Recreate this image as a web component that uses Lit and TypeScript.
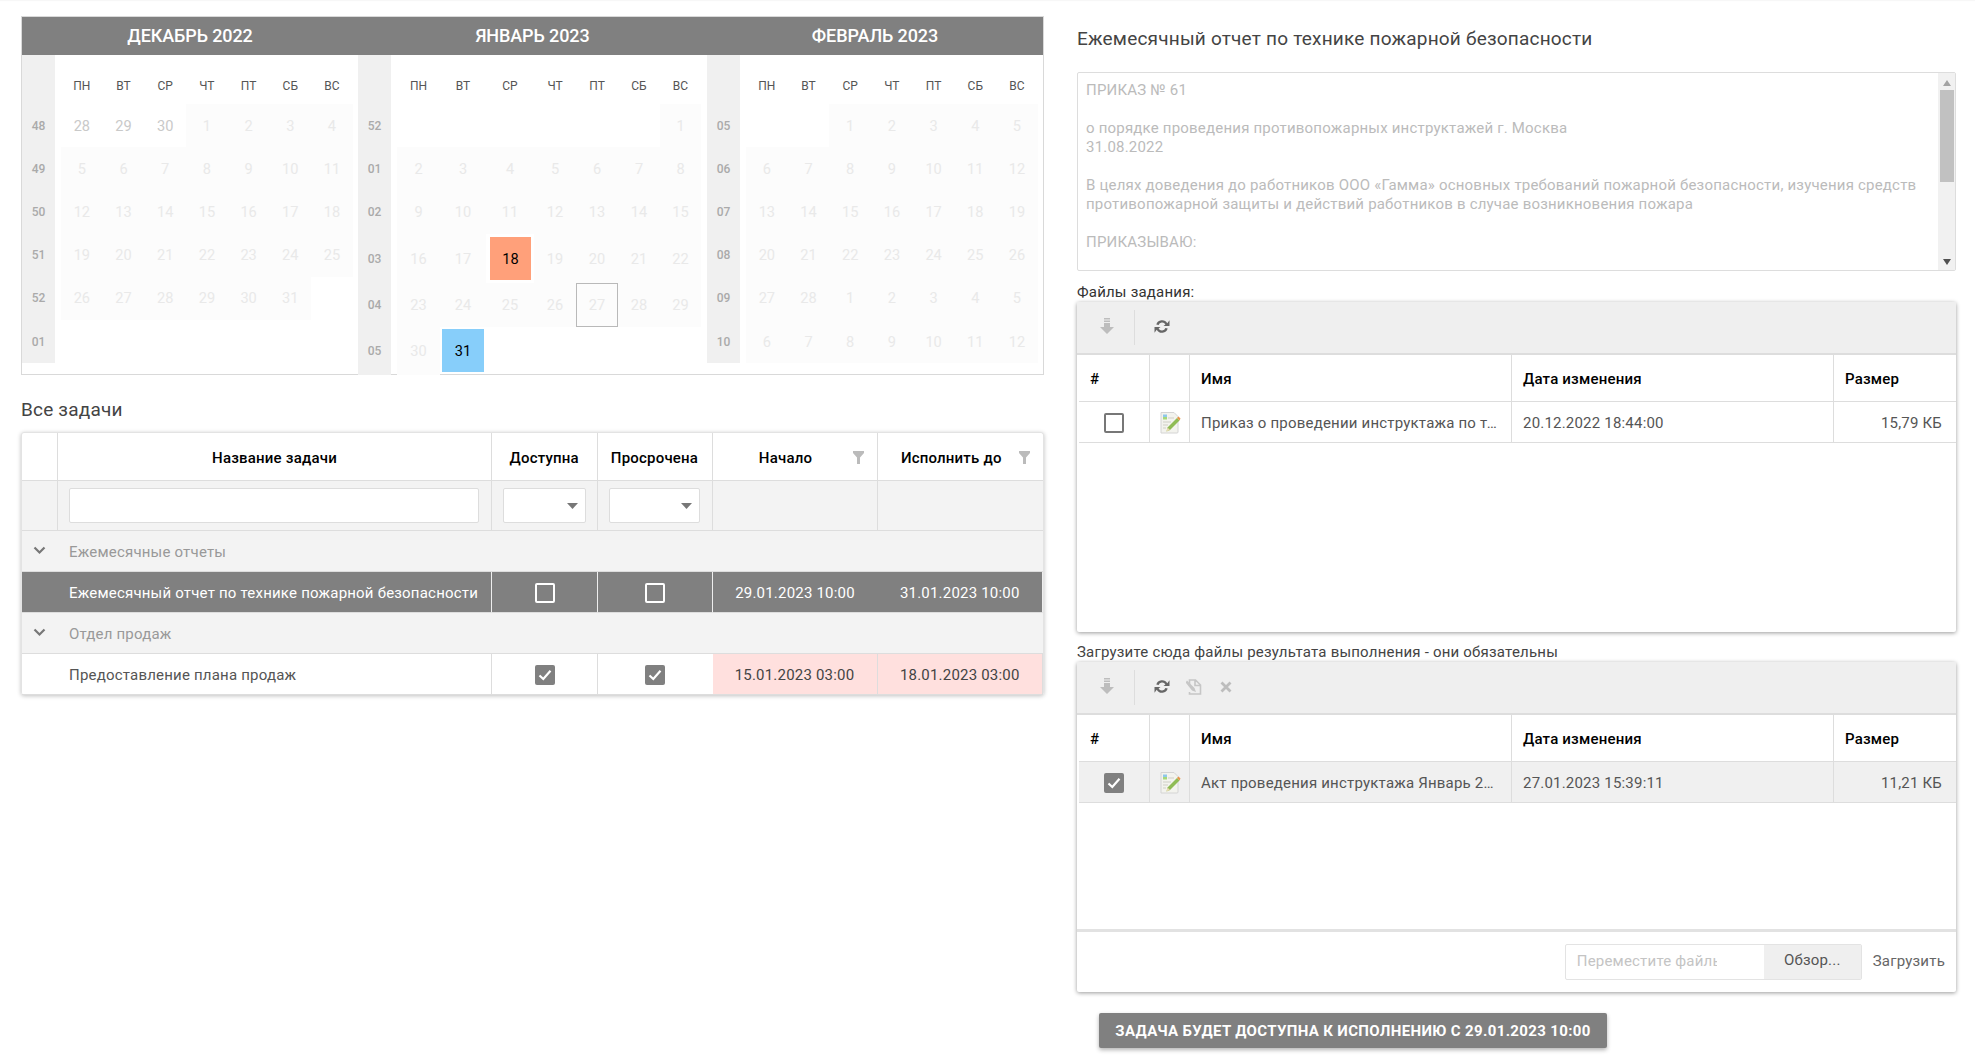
import { LitElement, html, css, nothing } from "lit";
import { customElement } from "lit/decorators.js";

type Cell = { d?: number; kind?: "old" | "day" | "deadline" | "end" | "today" };

const range = (a: number, b: number): Cell[] => {
  const out: Cell[] = [];
  for (let i = a; i <= b; i++) out.push({ d: i, kind: "day" });
  return out;
};
const blank = (n: number): Cell[] => Array.from({ length: n }, () => ({}));

const MONTHS = [
  {
    cls: "dec",
    title: "ДЕКАБРЬ 2022",
    weeks: ["48", "49", "50", "51", "52", "01"],
    rows: [
      [{ d: 28, kind: "old" }, { d: 29, kind: "old" }, { d: 30, kind: "old" }, ...range(1, 4)],
      range(5, 11),
      range(12, 18),
      range(19, 25),
      [...range(26, 31), {}],
      blank(7),
    ] as Cell[][],
  },
  {
    cls: "jan",
    title: "ЯНВАРЬ 2023",
    weeks: ["52", "01", "02", "03", "04", "05"],
    rows: [
      [...blank(6), ...range(1, 1)],
      range(2, 8),
      range(9, 15),
      [...range(16, 17), { d: 18, kind: "deadline" }, ...range(19, 22)],
      [...range(23, 26), { d: 27, kind: "today" }, ...range(28, 29)],
      [...range(30, 30), { d: 31, kind: "end" }, ...blank(5)],
    ] as Cell[][],
  },
  {
    cls: "feb",
    title: "ФЕВРАЛЬ 2023",
    weeks: ["05", "06", "07", "08", "09", "10"],
    rows: [
      [...blank(2), ...range(1, 5)],
      range(6, 12),
      range(13, 19),
      range(20, 26),
      [...range(27, 28), ...range(1, 5)],
      range(6, 12),
    ] as Cell[][],
  },
];

const DAYS = ["ПН", "ВТ", "СР", "ЧТ", "ПТ", "СБ", "ВС"];

const funnel = html`<svg class="funnel" width="11" height="13" viewBox="0 0 11 13"><path d="M0 0h11v2L7 6.500V13H4V6.500L0 2z" fill="#bbb"/></svg>`;
const chevron = html`<svg width="13" height="9" viewBox="0 0 13 9"><path d="M1.500 1.500L6.500 6.500L11.500 1.500" fill="none" stroke="#777" stroke-width="2.200"/></svg>`;
const caret = html`<svg width="11" height="6" viewBox="0 0 11 6"><path d="M0 0h11L5.500 6z" fill="#777"/></svg>`;
const tick = html`<svg width="18" height="18" viewBox="0 0 18 18"><path d="M3.500 9.500L7.300 13L14.500 4.800" fill="none" stroke="#fff" stroke-width="2.200"/></svg>`;

const icDown = html`<svg width="14" height="17" viewBox="0 0 14 17" fill="#bdbdbd"><path d="M4 0h6v1.500H4zM4 2.500h6V4H4zM4 5h6v4h4L7 16 0 9h4z"/></svg>`;
const icRefresh = html`<svg width="16" height="15" viewBox="0 0 16 15" fill="#666"><path d="M13.300 4.300A6 6 0 0 0 2.300 5.600l2.300.5a3.700 3.700 0 0 1 6.800-.7L9.500 7H15.500V1.200zM2.700 10.700A6 6 0 0 0 13.700 9.400l-2.300-.5a3.700 3.700 0 0 1-6.800.7L6.500 8H.5v5.800z"/></svg>`;
const icFile = html`<svg width="16" height="16" viewBox="0 0 16 16"><path d="M3.500 6V1h6l5 5v9h-11v-2 M9 1.500V6.500h5" fill="none" stroke="#c6c6c6" stroke-width="1.600"/><path d="M1 1.500L8.500 9l1.500 4L6 11.500L-.5 3.500z" fill="#c6c6c6"/></svg>`;
const icClose = html`<svg width="12" height="12" viewBox="0 0 12 12"><path d="M1.500 1.500l9 9M10.500 1.500l-9 9" stroke="#bdbdbd" stroke-width="2.800"/></svg>`;
const icDoc = html`<svg width="21" height="23" viewBox="0 0 21 23">
  <path d="M1 1.500h13l4 4V21a1 1 0 0 1-1 1H1z" fill="#f3f3ee" stroke="#d4d4d4"/>
  <rect x="3" y="3.500" width="4" height="2.500" fill="#8fc7ea"/>
  <rect x="3" y="6" width="4" height="2.500" fill="#a6d878"/>
  <path d="M8 7h6M3 11h8M3 14h5M3 17h3" stroke="#cfcfc6" stroke-width="1"/>
  <path d="M6.500 20.500l1-4L17 7l2.500 2.500L10 19z" fill="#8fbc55"/>
  <path d="M17 7l1.500-1.500 2 2-1 2z" fill="#e8954a"/>
  <path d="M6.500 20.500l1-4 2.500 2.500z" fill="#e9d9b0"/>
</svg>`;

@customElement("app-root")
export class AppRoot extends LitElement {
  static styles = css`
    :host {
      display: flex;
      width: 1975px;
      height: 1062px;
      overflow: hidden;
      background: #fff;
      font-family: Roboto, "Noto Sans", sans-serif;
      font-size: 15px;
      letter-spacing: 0.2px;
      color: #555;
      box-shadow: inset 0 2px 2px -2px rgba(0, 0, 0, 0.12);
    }
    .left {
      width: 1023px;
      margin-left: 21px;
      padding-top: 16px;
      flex: none;
    }
    .right {
      width: 879px;
      margin-left: 33px;
      flex: none;
    }

    /* calendar */
    .calendar {
      height: 359px;
      border: 1px solid #d9d9d9;
      box-sizing: border-box;
      width: 1023px;
    }
    .cal-head {
      display: flex;
      height: 38px;
      background: #808080;
      color: #fff;
      font-size: 18px;
      font-weight: 500;
      letter-spacing: -0.1px;
      line-height: 38px;
      text-align: center;
    }
    .cal-body {
      display: flex;
      height: 319px;
      letter-spacing: 0;
    }
    .m-dec, .m-feb { width: 336px; flex: none; }
    .m-jan { width: 349px; flex: none; }
    .month {
      display: flex;
      align-items: flex-start;
    }
    .weeks {
      width: 33px;
      flex: none;
      background: #f0f0f0;
      padding-top: 49px;
      display: grid;
      color: #aaa;
      font-size: 12px;
      font-weight: 500;
      text-align: center;
    }
    .weeks div {
      display: flex;
      align-items: center;
      justify-content: center;
    }
    .days {
      margin-left: 6px;
      display: grid;
      grid-template-columns: repeat(7, 41.7px);
      grid-template-rows: 49px repeat(6, 43.2px);
    }
    .m-dec .weeks, .m-feb .weeks {
      grid-template-rows: repeat(6, 43.2px);
    }
    .m-jan .weeks {
      grid-template-rows: 43px 43px 44px 49px 44px 48px;
    }
    .m-jan .days {
      grid-template-columns: 43px 46px 48px 42px 42px 42px 41px;
      grid-template-rows: 49px 43px 43px 44px 49px 44px 48px;
    }
    .dow {
      color: #555;
      font-size: 12px;
      display: flex;
      align-items: center;
      justify-content: center;
      padding-top: 12px;
      box-sizing: border-box;
    }
    .cell {
      display: flex;
      align-items: center;
      justify-content: center;
      font-size: 14.600px;
      color: #e9e9e9;
    }
    .cell.day, .cell.today { background: #fcfcfc; }
    .cell.old { color: #c9c9c9; }
    .cell.today {
      color: #e9e9e9;
      box-shadow: inset 0 0 0 1px #b9b9b9;
    }
    .mark {
      flex: 1;
      align-self: stretch;
      color: #000;
      display: flex;
      align-items: center;
      justify-content: center;
    }
    .cell.deadline .mark { background: #ffa07a; margin: 3px 3px 3px 4px; }
    .cell.end .mark { background: #87cefa; margin: 2px 2px 3px 2px; }

    /* tasks table */
    h2 {
      margin: 0;
      font-weight: 400;
      font-size: 19px;
      letter-spacing: 0.2px;
      color: #444;
    }
    .tasks-title {
      height: 57px;
      line-height: 70px;
    }
    .tasks {
      display: grid;
      grid-template-columns: 36px 434px 105.500px 115px 165px 1fr;
      grid-template-rows: 48px 50px 41px 41px 41px 41px;
      width: 1023px;
      box-sizing: border-box;
      border: 1px solid #e3e3e3;
      border-bottom: 0;
      border-radius: 3px;
      box-shadow: 0 1px 4px rgba(0, 0, 0, 0.25);
    }
    .tc {
      display: flex;
      align-items: center;
      justify-content: center;
      box-sizing: border-box;
      border-right: 1px solid #ddd;
      border-bottom: 1px solid #ddd;
      min-width: 0;
      white-space: nowrap;
      padding-top: 1px;
    }
    .tc:nth-child(6n) { border-right: 0; }
    .tc.th {
      color: #000;
      font-weight: 500;
      position: relative;
      padding-top: 2px;
    }
    .tc.th.dated { padding-right: 18px; }
    .funnel {
      position: absolute;
      right: 13px;
      top: 18px;
    }
    .tc.filter { background: #f3f3f3; padding-top: 0; }
    .tc.name {
      justify-content: flex-start;
      padding-left: 11px;
    }
    .field {
      height: 35px;
      background: #fff;
      border: 1px solid #ddd;
      border-radius: 2px;
      box-sizing: border-box;
      display: flex;
      align-items: center;
      justify-content: flex-end;
      padding-right: 7px;
    }
    .f-name { width: 410px; margin-right: 2px; }
    .f-a { width: 83px; }
    .f-b { width: 91px; }
    .group {
      grid-column: 1 / -1;
      display: grid;
      grid-template-columns: 36px 1fr;
      align-items: center;
      background: #f3f3f3;
      color: #999;
      border-bottom: 1px solid #ddd;
      padding-top: 1px;
    }
    .group span:first-child {
      display: flex;
      justify-content: center;
      padding: 0 2px 3px 0;
    }
    .group span:last-child { padding-left: 11px; }
    .selected {
      background: #808080;
      color: #fff;
      border-right-color: #eee;
    }
    .selected.noborder, .plain.noborder { border-right: 0; }
    .overdue { background: #ffe0de; color: #444; }
    .cb {
      width: 20px;
      height: 20px;
      box-sizing: border-box;
      border-radius: 2px;
      display: flex;
      align-items: center;
      justify-content: center;
    }
    .shift { margin-left: 2px; }
    .cb.white { border: 2px solid #fff; }
    .cb.grey { border: 2px solid #777; }
    .cb.on { background: #808080; }

    /* right column */
    .task-title {
      height: 72px;
      line-height: 78px;
    }
    .order {
      height: 199px;
      border: 1px solid #ddd;
      border-radius: 2px;
      box-sizing: border-box;
      display: flex;
      color: #bbb;
      line-height: 19px;
    }
    .order-text {
      flex: 1;
      padding: 8px 0 0 8px;
      overflow: hidden;
    }
    .order-text p { margin: 0 0 19px; }
    .scroll {
      width: 17px;
      flex: none;
      background: #f1f1f1;
      display: flex;
      flex-direction: column;
      align-items: center;
      justify-content: space-between;
      padding: 7px 0 5px;
      box-sizing: border-box;
      position: relative;
    }
    .thumb {
      position: absolute;
      left: 2px;
      right: 1px;
      top: 17px;
      height: 92px;
      background: #c1c1c1;
    }
    .lbl {
      color: #333;
      line-height: 16px;
    }
    .lbl.one { margin-top: 13px; height: 18px; }
    .lbl.two { margin-top: 12px; height: 18px; color: #444; }
    .panel {
      box-shadow: 0 1px 4px rgba(0, 0, 0, 0.4);
      border-radius: 2px;
      display: flex;
      flex-direction: column;
      width: 879px;
      height: 330px;
      box-sizing: border-box;
      padding: 0 0 0 2px;
      background: #fff;
    }
    .bar {
      height: 51px;
      margin-left: -2px;
      flex: none;
      background: #efefef;
      border-bottom: 2px solid #ddd;
      display: flex;
      align-items: center;
    }
    .bar .ic {
      display: flex;
      align-items: center;
      justify-content: center;
      margin-top: -2px;
    }
    .bar .dl { width: 16px; margin-left: 22px; }
    .bar .sep {
      width: 1px;
      height: 35px;
      background: #ddd;
      margin: 0 19px;
    }
    .bar .rf { width: 16px; }
    .bar .fl { width: 16px; margin-left: 16px; }
    .bar .x { width: 12px; margin-left: 18px; }
    .files {
      display: grid;
      grid-template-columns: 71px 40px 322px 322px 1fr;
      grid-template-rows: 47px 41px;
    }
    .fc {
      display: flex;
      align-items: center;
      box-sizing: border-box;
      border-right: 1px solid #ddd;
      border-bottom: 1px solid #ddd;
      padding: 2px 11px 0;
      white-space: nowrap;
      min-width: 0;
    }
    .fc:nth-child(5n) { border-right: 0; }
    .fc.th { color: #000; font-weight: 500; }
    .fc.ctr { padding: 1px 0 0; justify-content: center; }
    .fc.ico { padding: 0 0 0 2px; justify-content: center; }
    .fc.num { padding: 2px 14px 0 0; justify-content: flex-end; }
    .fc .ell {
      overflow: hidden;
      text-overflow: ellipsis;
      display: block;
    }
    .files.sel .rowc { background: #f0f0f0; }
    .spacer { flex: 1; }
    .footer {
      height: 60px;
      flex: none;
      margin-left: -2px;
      border-top: 3px solid #e2e2e2;
      display: flex;
      align-items: center;
      justify-content: flex-end;
    }
    .upload {
      display: flex;
      height: 36px;
      border: 1px solid #e3e3e3;
      border-radius: 2px;
      box-sizing: border-box;
      margin-right: 11px;
    }
    .upload .hint {
      width: 198px;
      box-sizing: border-box;
      margin-right: 0;
      padding-left: 11px;
      color: #c4c4c4;
      line-height: 32px;
    }
    .upload .hint span {
      display: block;
      width: 140px;
      overflow: hidden;
      white-space: nowrap;
    }
    .upload .browse {
      width: 97px;
      background: #efefef;
      color: #555;
      text-align: center;
      line-height: 31px;
    }
    .send { margin-right: 11px; color: #666; padding-bottom: 3px; }
    .go {
      margin: 21px 0 0 22px;
      width: 508px;
      height: 35px;
      background: #808080;
      color: #fff;
      font-weight: 700;
      letter-spacing: 0.350px;
      border-radius: 2px;
      box-shadow: 0 2px 4px rgba(0, 0, 0, 0.3);
      display: flex;
      align-items: center;
      justify-content: center;
    }
  `;

  renderMonth(m: (typeof MONTHS)[number]) {
    return html`<div class="month m-${m.cls}">
      <div class="weeks">${m.weeks.map((w) => html`<div>${w}</div>`)}</div>
      <div class="days">
        ${DAYS.map((d) => html`<div class="dow">${d}</div>`)}
        ${m.rows.flat().map((c) => {
          if (c.kind === "deadline" || c.kind === "end")
            return html`<div class="cell ${c.kind}"><div class="mark">${c.d}</div></div>`;
          return html`<div class="cell ${c.kind ?? ""}">${c.d ?? nothing}</div>`;
        })}
      </div>
    </div>`;
  }

  renderFiles(sel: boolean, name: string, date: string, size: string) {
    const row = sel ? "rowc" : "";
    return html`<div class="files ${sel ? "sel" : ""}">
      <div class="fc th">#</div>
      <div class="fc th"></div>
      <div class="fc th">Имя</div>
      <div class="fc th">Дата изменения</div>
      <div class="fc th">Размер</div>
      <div class="fc ctr ${row}">
        ${sel ? html`<span class="cb on">${tick}</span>` : html`<span class="cb grey"></span>`}
      </div>
      <div class="fc ico ${row}">${icDoc}</div>
      <div class="fc ${row}"><span class="ell">${name}</span></div>
      <div class="fc ${row}">${date}</div>
      <div class="fc num ${row}">${size}</div>
    </div>`;
  }

  render() {
    return html`
      <div class="left">
        <div class="calendar">
          <div class="cal-head">
            ${MONTHS.map((m) => html`<div class="m-${m.cls}">${m.title}</div>`)}
          </div>
          <div class="cal-body">${MONTHS.map((m) => this.renderMonth(m))}</div>
        </div>
        <h2 class="tasks-title">Все задачи</h2>
        <div class="tasks">
          <div class="tc th"></div>
          <div class="tc th">Название задачи</div>
          <div class="tc th">Доступна</div>
          <div class="tc th">Просрочена</div>
          <div class="tc th dated">Начало${funnel}</div>
          <div class="tc th dated">Исполнить до${funnel}</div>

          <div class="tc filter"></div>
          <div class="tc filter"><div class="field f-name"></div></div>
          <div class="tc filter"><div class="field f-a">${caret}</div></div>
          <div class="tc filter"><div class="field f-b">${caret}</div></div>
          <div class="tc filter"></div>
          <div class="tc filter"></div>

          <div class="group"><span>${chevron}</span><span>Ежемесячные отчеты</span></div>

          <div class="tc selected noborder"></div>
          <div class="tc name selected">Ежемесячный отчет по технике пожарной безопасности</div>
          <div class="tc selected"><span class="cb white shift"></span></div>
          <div class="tc selected"><span class="cb white"></span></div>
          <div class="tc selected">29.01.2023 10:00</div>
          <div class="tc selected">31.01.2023 10:00</div>

          <div class="group"><span>${chevron}</span><span>Отдел продаж</span></div>

          <div class="tc plain noborder"></div>
          <div class="tc name">Предоставление плана продаж</div>
          <div class="tc"><span class="cb on shift">${tick}</span></div>
          <div class="tc"><span class="cb on">${tick}</span></div>
          <div class="tc overdue">15.01.2023 03:00</div>
          <div class="tc overdue">18.01.2023 03:00</div>
        </div>
      </div>

      <div class="right">
        <h2 class="task-title">Ежемесячный отчет по технике пожарной безопасности</h2>
        <div class="order">
          <div class="order-text">
            <p>ПРИКАЗ № 61</p>
            <p>о порядке проведения противопожарных инструктажей г. Москва<br />31.08.2022</p>
            <p>В целях доведения до работников ООО «Гамма» основных требований пожарной безопасности, изучения средств<br />противопожарной защиты и действий работников в случае возникновения пожара</p>
            <p>ПРИКАЗЫВАЮ:</p>
          </div>
          <div class="scroll">
            <svg width="8" height="6" viewBox="0 0 8 6"><path d="M4 0l4 6H0z" fill="#a3a3a3"/></svg>
            <div class="thumb"></div>
            <svg width="8" height="6" viewBox="0 0 8 6"><path d="M0 0h8L4 6z" fill="#505050"/></svg>
          </div>
        </div>

        <div class="lbl one">Файлы задания:</div>
        <div class="panel">
          <div class="bar">
            <span class="ic dl">${icDown}</span><span class="sep"></span>
            <span class="ic rf">${icRefresh}</span>
          </div>
          ${this.renderFiles(false, "Приказ о проведении инструктажа по технике пожарной безопасности.docx", "20.12.2022 18:44:00", "15,79 КБ")}
        </div>

        <div class="lbl two">Загрузите сюда файлы результата выполнения - они обязательны</div>
        <div class="panel">
          <div class="bar">
            <span class="ic dl">${icDown}</span><span class="sep"></span>
            <span class="ic rf">${icRefresh}</span>
            <span class="ic fl">${icFile}</span>
            <span class="ic x">${icClose}</span>
          </div>
          ${this.renderFiles(true, "Акт проведения инструктажа Январь 2023 года подписанный.docx", "27.01.2023 15:39:11", "11,21 КБ")}
          <div class="spacer"></div>
          <div class="footer">
            <div class="upload">
              <div class="hint"><span>Переместите файлы</span></div>
              <div class="browse">Обзор...</div>
            </div>
            <div class="send">Загрузить</div>
          </div>
        </div>

        <div class="go">ЗАДАЧА БУДЕТ ДОСТУПНА К ИСПОЛНЕНИЮ С 29.01.2023 10:00</div>
      </div>
    `;
  }
}
